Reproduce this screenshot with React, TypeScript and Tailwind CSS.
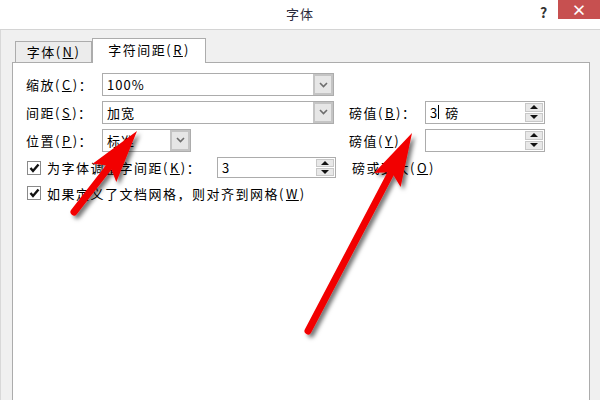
import type { ReactNode } from 'react';

const font = { fontFamily: '"Noto Sans CJK SC", "Liberation Sans", sans-serif' };

// mnemonic letter in parens, e.g. (C) with underlined C
function Mn({ k }: { k: string }) {
  return (
    <span>
      (<u className="mx-[1px]">{k}</u>)
    </span>
  );
}

function Chevron() {
  return (
    <svg width="9" height="6" viewBox="0 0 9 6" className="block">
      <polyline points="1,1 4.5,4.5 8,1" fill="none" stroke="#6d6d6d" strokeWidth="1.6" />
    </svg>
  );
}

function Combo({ value, width }: { value: string; width: string }) {
  return (
    <div className={`flex h-[23px] ${width} border border-[#acacac] bg-white`}>
      <div className="flex flex-1 items-center pl-[4px] text-[13px] leading-none tracking-[1px] text-black">{value}</div>
      <div className="flex w-[20px] items-center justify-center border-2 border-[#c4c4c4] bg-[#e6e6e6]">
        <Chevron />
      </div>
    </div>
  );
}

function Spinner({ value, width, height, caret }: { value: string; width: string; height: string; caret?: boolean }) {
  return (
    <div className={`flex ${height} ${width} border border-[#acacac] bg-white`}>
      <div className="flex flex-1 items-center pl-[4px] text-[13px] leading-none text-black">
        {caret ? (
          <>
            <span>3</span>
            <span className="mx-px inline-block h-[14px] w-px bg-black" />
            <span className="ml-[5px]">磅</span>
          </>
        ) : (
          value
        )}
      </div>
      <div className="flex w-[20px] flex-col gap-px bg-white p-px">
        <div className="flex flex-1 items-center justify-center border border-[#c8c8c8] bg-[#e8e8e8]">
          <svg width="8" height="4" viewBox="0 0 8 4"><polygon points="0,4 4,0 8,4" fill="#111" /></svg>
        </div>
        <div className="flex flex-1 items-center justify-center border border-[#c8c8c8] bg-[#e8e8e8]">
          <svg width="8" height="4" viewBox="0 0 8 4"><polygon points="0,0 8,0 4,4" fill="#111" /></svg>
        </div>
      </div>
    </div>
  );
}

function Checkbox() {
  return (
    <div className="flex h-[14px] w-[14px] shrink-0 items-center justify-center border border-[#8a8a8a] bg-white">
      <svg width="11" height="10" viewBox="0 0 11 10">
        <polyline points="1.5,5 4,8 9.5,1.5" fill="none" stroke="#111" strokeWidth="2.4" />
      </svg>
    </div>
  );
}

function Label({ children, width = 'w-[76px]' }: { children: ReactNode; width?: string }) {
  return <div className={`${width} shrink-0 whitespace-nowrap text-[13px] leading-none tracking-[1.5px] text-black`}>{children}</div>;
}

function Arrow({ tail, tip }: { tail: [number, number]; tip: [number, number] }) {
  const dx = tip[0] - tail[0];
  const dy = tip[1] - tail[1];
  const len = Math.hypot(dx, dy);
  const ux = dx / len;
  const uy = dy / len;
  const nx = -uy;
  const ny = ux;
  const H = 50;
  const W = 15;
  const bx = tip[0] - ux * H;
  const by = tip[1] - uy * H;
  const head = [
    [tip[0], tip[1]],
    [bx + nx * W - ux * 3, by + ny * W - uy * 3],
    [bx + ux * 6, by + uy * 6],
    [bx - nx * W - ux * 3, by - ny * W - uy * 3],
  ]
    .map((p) => p.join(','))
    .join(' ');
  return (
    <g filter="url(#shadow)">
      <line x1={tail[0]} y1={tail[1]} x2={bx + ux * 8} y2={by + uy * 8} stroke="#f20000" strokeWidth="7" strokeLinecap="round" />
      <polygon points={head} fill="#f20000" />
    </g>
  );
}

export default function App() {
  return (
    <div className="relative h-[400px] w-[600px] overflow-hidden bg-[#f0f0f0]" style={font}>
      {/* title bar */}
      <div className="relative flex h-[30px] items-center justify-center border-b border-[#d4d4d4] bg-white">
        <span className="-mt-[2px] text-[13px] tracking-[1px] text-[#2b2b3b]">字体</span>
        <span className="absolute left-[540px] top-[2px] text-[14px] font-bold text-[#333]">?</span>
        <div className="absolute right-0 top-0 flex h-[19px] w-[42px] items-center justify-center bg-[#c75050] text-[15px] font-bold leading-none text-white">
          ×
        </div>
      </div>

      <div className="h-[370px] border-l border-[#d8d8d8] pl-[11px] pr-[10px] pt-[8px]">
        {/* tabs */}
        <div className="flex items-end pl-[3px]">
          <div className="flex h-[21px] w-[77px] items-center justify-center border border-b-0 border-[#acacac] bg-[#ececec] text-[13px] tracking-[1.5px] text-black">
            字体<Mn k="N" />
          </div>
          <div className="relative z-10 -mb-px flex h-[25px] w-[114px] items-center justify-center border border-b-0 border-[#acacac] bg-white pb-[2px] text-[13px] tracking-[1.5px] text-black">
            字符间距<Mn k="R" />
          </div>
        </div>

        {/* panel */}
        <div className="h-[360px] border border-[#acacac] bg-white pl-[13px] pt-[10px]">
          <div className="flex h-[23px] items-center">
            <Label>缩放<Mn k="C" />：</Label>
            <Combo value="100%" width="w-[232px]" />
          </div>

          <div className="mt-[4px] flex h-[24px] items-center">
            <Label>间距<Mn k="S" />：</Label>
            <Combo value="加宽" width="w-[232px]" />
            <div className="w-[15px]" />
            <Label>磅值<Mn k="B" />：</Label>
            <Spinner value="" caret width="w-[120px]" height="h-[23px]" />
          </div>

          <div className="mt-[4px] flex h-[24px] items-center">
            <Label>位置<Mn k="P" />：</Label>
            <div className="w-[232px]">
              <Combo value="标准" width="w-[89px]" />
            </div>
            <div className="w-[15px]" />
            <Label>磅值<Mn k="Y" /></Label>
            <Spinner value="" width="w-[120px]" height="h-[23px]" />
          </div>

          <div className="mt-[5px] flex h-[21px] items-center">
            <div className="flex w-[191px] items-center pl-[1px]">
              <Checkbox />
              <span className="ml-[6px] whitespace-nowrap text-[13px] leading-none tracking-[1.5px] text-black">
                为字体调整字间距<Mn k="K" />：
              </span>
            </div>
            <Spinner value="3" width="w-[119px]" height="h-[21px]" />
            <span className="ml-[16px] text-[13px] leading-none tracking-[1.5px] text-black">
              磅或更大<Mn k="O" />
            </span>
          </div>

          <div className="mt-[7px] flex h-[16px] items-center pl-[1px]">
            <Checkbox />
            <span className="ml-[6px] whitespace-nowrap text-[13px] leading-none tracking-[1.5px] text-black">
              如果定义了文档网格，则对齐到网格<Mn k="W" />
            </span>
          </div>
        </div>
      </div>

      {/* red annotation arrows */}
      <svg className="pointer-events-none absolute left-0 top-0" width="600" height="400">
        <defs>
          <filter id="shadow" x="-20%" y="-20%" width="140%" height="140%">
            <feDropShadow dx="3" dy="3" stdDeviation="2" floodColor="#000" floodOpacity="0.55" />
          </filter>
        </defs>
        <Arrow tail={[74, 212]} tip={[137, 131]} />
        <Arrow tail={[308, 331]} tip={[412, 133]} />
      </svg>
    </div>
  );
}
